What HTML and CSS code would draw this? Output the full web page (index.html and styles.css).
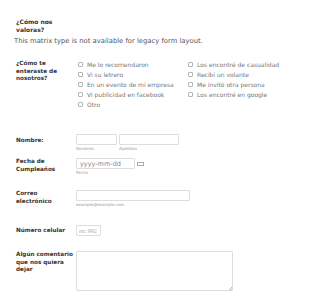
FILE: index.html
```
<!DOCTYPE html>
<html lang="es">
<head>
    <meta charset="UTF-8">
    <meta name="viewport" content="width=device-width, initial-scale=1.0">
    <title>Formulario</title>
    <link rel="stylesheet" href="styles.css">
</head>
<body>
    <form class="form">
        <div class="matrix">
            <h3>¿Cómo nos valoras?</h3>
            <p>This matrix type is not available for legacy form layout.</p>
        </div>

        <div class="row row-checks">
            <label class="lbl">¿Cómo te enteraste de nosotros?</label>
            <div class="checks">
                <label class="check"><input type="checkbox"><span>Me lo recomendaron</span></label>
                <label class="check"><input type="checkbox"><span>Los encontré de casualidad</span></label>
                <label class="check"><input type="checkbox"><span>Vi su letrero</span></label>
                <label class="check"><input type="checkbox"><span>Recibí un volante</span></label>
                <label class="check"><input type="checkbox"><span>En un evento de mi empresa</span></label>
                <label class="check"><input type="checkbox"><span>Me invitó otra persona</span></label>
                <label class="check"><input type="checkbox"><span>Vi publicidad en facebook</span></label>
                <label class="check"><input type="checkbox"><span>Los encontré en google</span></label>
                <label class="check"><input type="checkbox"><span>Otro</span></label>
            </div>
        </div>

        <div class="row row-nombre">
            <label class="lbl">Nombre:</label>
            <div class="field-group">
                <div class="sub">
                    <input type="text" class="txt w-first">
                    <span class="sublabel">Nombres</span>
                </div>
                <div class="sub">
                    <input type="text" class="txt w-last">
                    <span class="sublabel">Apellidos</span>
                </div>
            </div>
        </div>

        <div class="row row-fecha">
            <label class="lbl">Fecha de Cumpleaños</label>
            <div class="sub">
                <div class="date-line">
                    <input type="text" class="txt w-date" placeholder="yyyy-mm-dd">
                    <svg class="cal" width="7" height="4" viewBox="0 0 7 4"><rect x="0.5" y="0.5" width="6" height="3" fill="none" stroke="#aaa"/></svg>
                </div>
                <span class="sublabel">Fecha</span>
            </div>
        </div>

        <div class="row row-correo">
            <label class="lbl">Correo electrónico</label>
            <div class="sub">
                <input type="text" class="txt w-mail">
                <span class="sublabel">example@example.com</span>
            </div>
        </div>

        <div class="row row-cel">
            <label class="lbl">Número celular</label>
            <input type="text" class="txt w-cel" placeholder="ex: 992">
        </div>

        <div class="row row-coment">
            <label class="lbl">Algún comentario que nos quiera dejar</label>
            <div class="area-wrap">
                <textarea class="area"></textarea>
                <span class="grip"></span>
            </div>
        </div>
    </form>
</body>
</html>
```

FILE: styles.css
```
body {
    margin: 0;
    background-color: #fff;
    font-family: "DejaVu Sans", Verdana, sans-serif;
    font-size: 6px;
    color: #555;
}
.form {
    padding: 18px 0 0 14px;
}
.matrix h3 {
    margin: 0 0 3px 2px;
    width: 44px;
    font-size: 6px;
    line-height: 8px;
    color: #333;
}
.matrix p {
    margin: 0;
    font-size: 6.8px;
    line-height: 8px;
    color: #555;
}
.row {
    display: flex;
    align-items: flex-start;
}
.lbl {
    width: 59px;
    margin-left: 2px;
    margin-right: 1px;
    font-size: 5.7px;
    font-weight: bold;
    line-height: 7.5px;
    color: #333;
}
.row-checks {
    margin-top: 14px;
}
.row-checks .lbl {
    padding-top: 1px;
    width: 52px;
    margin-right: 8px;
}
.checks {
    display: grid;
    grid-template-columns: 110px 110px;
    margin-left: 2px;
}
.check {
    display: flex;
    align-items: center;
    height: 10px;
    color: #777;
}
.check input {
    appearance: none;
    width: 5px;
    height: 5px;
    margin: 0 4px 0 0;
    border: 1px solid #b5b5b5;
    border-radius: 1px;
    background: #fff;
}
.check:nth-child(9) {
    grid-column: 1;
}
.row-nombre {
    margin-top: 25px;
}
.row-nombre .lbl {
    padding-top: 3px;
}
.field-group {
    display: flex;
    gap: 2px;
}
.sub {
    display: flex;
    flex-direction: column;
}
.txt {
    box-sizing: border-box;
    height: 11px;
    margin: 0;
    padding: 0 3px;
    border: 1px solid #ddd;
    border-radius: 1px;
    font-family: "DejaVu Sans", Verdana, sans-serif;
    font-size: 6.5px;
    color: #555;
    background: #fff;
}
.txt::placeholder {
    color: #8a8a8a;
}
.w-first { width: 41px; }
.w-last { width: 60px; }
.w-date { width: 59px; }
.w-mail { width: 114px; }
.w-cel {
    width: 25px;
    padding: 0 2px;
    font-family: "Liberation Serif", serif;
    font-size: 6px;
}
.w-cel::placeholder {
    color: #aaa;
}
.sublabel {
    margin-top: 1px;
    font-size: 4px;
    line-height: 6px;
    color: #999;
}
.row-fecha {
    margin-top: 6px;
}
.date-line {
    display: flex;
    align-items: center;
    gap: 2px;
}
.cal {
    display: block;
}
.row-correo {
    margin-top: 14px;
}
.row-cel {
    margin-top: 17px;
}
.row-cel .lbl {
    padding-top: 2px;
}
.row-coment {
    margin-top: 15px;
}
.area-wrap {
    position: relative;
}
.area {
    display: block;
    box-sizing: border-box;
    width: 157px;
    height: 40px;
    margin: 0;
    border: 1px solid #ddd;
    border-radius: 1px;
    resize: none;
}
.grip {
    position: absolute;
    right: 1px;
    bottom: 1px;
    width: 3px;
    height: 3px;
    background: linear-gradient(135deg, transparent 45%, #bbb 45%, #bbb 60%, transparent 60%, transparent 75%, #bbb 75%);
}
```
